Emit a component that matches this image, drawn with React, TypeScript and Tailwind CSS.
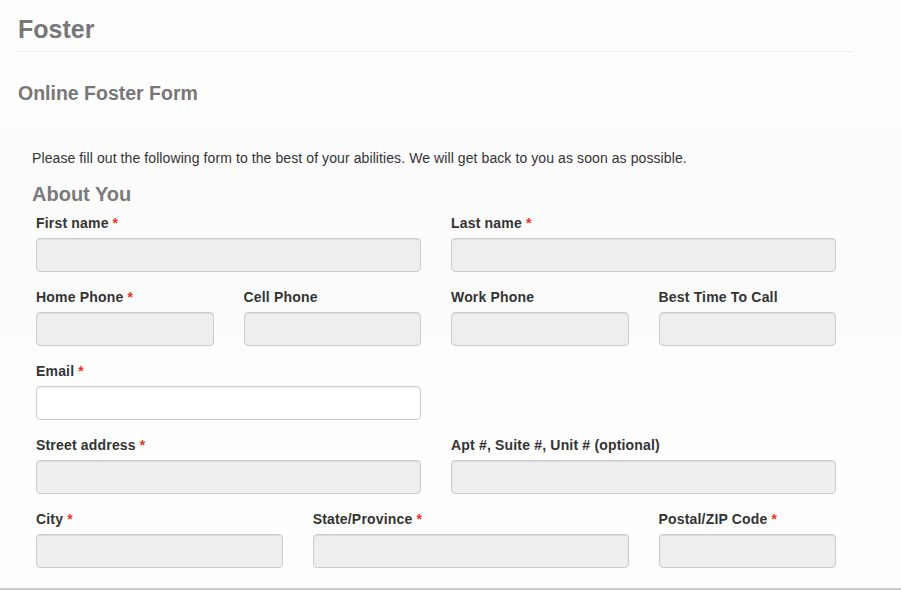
const fields: { label: string; span: string; required?: boolean; white?: boolean }[][] = [
  [
    { label: 'First name', span: 'col-span-6', required: true },
    { label: 'Last name', span: 'col-span-6', required: true },
  ],
  [
    { label: 'Home Phone', span: 'col-span-3', required: true },
    { label: 'Cell Phone', span: 'col-span-3' },
    { label: 'Work Phone', span: 'col-span-3' },
    { label: 'Best Time To Call', span: 'col-span-3' },
  ],
  [{ label: 'Email', span: 'col-span-6', required: true, white: true }],
  [
    { label: 'Street address', span: 'col-span-6', required: true },
    { label: 'Apt #, Suite #, Unit # (optional)', span: 'col-span-6' },
  ],
  [
    { label: 'City', span: 'col-span-4', required: true },
    { label: 'State/Province', span: 'col-span-5', required: true },
    { label: 'Postal/ZIP Code', span: 'col-span-3', required: true },
  ],
]

function Field({ label, span, required, white }: { label: string; span: string; required?: boolean; white?: boolean }) {
  return (
    <div className={`${span} mb-[14px]`}>
      <label className="block pt-[1px] mb-[5px] text-[14px] leading-[20px] font-bold tracking-[0.18px] text-[#333]">
        {label}
        {required && <span className="text-[#e32] ml-[4px]">*</span>}
      </label>
      <input
        type="text"
        className={`block w-full h-[34px] rounded-[4px] border border-[#ccc] shadow-[inset_0_1px_1px_rgba(0,0,0,0.075)] ${
          white ? 'bg-white' : 'bg-[#eee]'
        }`}
      />
    </div>
  )
}

export default function App() {
  return (
    <div className="h-[590px] flex flex-col overflow-hidden font-['Liberation_Sans',Arial,sans-serif] bg-[linear-gradient(to_bottom,#fefefe_118px,#fcfcfc_126px,#fcfcfc_336px,#fefefe_342px)]">
      <div className="flex-1 overflow-hidden pl-[18px]">
        <div className="w-[835px]">
          <h1 className="pt-[11px] pb-[4px] text-[25px] leading-[36px] font-bold text-[#777] border-b border-[#eee]">
            Foster
          </h1>
          <h2 className="mt-[27px] text-[19.5px] leading-[28px] font-bold text-[#777]">Online Foster Form</h2>
          <div className="pl-[14px]">
            <p className="mt-[41px] text-[14px] leading-[20px] tracking-[0.09px] text-[#333]">
              Please fill out the following form to the best of your abilities. We will get back to you as soon as possible.
            </p>
            <h3 className="mt-[12px] text-[20px] leading-[28px] font-bold text-[#7a7a7a]">About You</h3>
            <div className="mt-[4px] pl-[4px] w-[804px]">
              {fields.map((row, i) => (
                <div key={i} className="grid grid-cols-12 gap-x-[30px]">
                  {row.map((f) => (
                    <Field key={f.label} {...f} />
                  ))}
                </div>
              ))}
            </div>
          </div>
        </div>
      </div>
      <div className="h-[2px] bg-[#ccc]" />
    </div>
  )
}
